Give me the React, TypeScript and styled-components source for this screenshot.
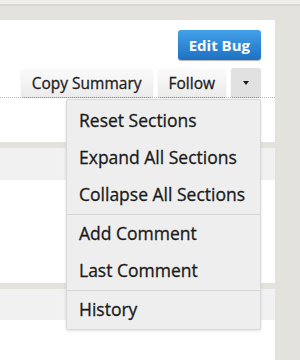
import React from "react";
import styled, { createGlobalStyle } from "styled-components";

const GlobalStyle = createGlobalStyle`
  html, body {
    margin: 0;
    padding: 0;
    background: #e4e2dc;
    font-family: "Open Sans", "Noto Sans", sans-serif;
    color: #1c1c1c;
  }
`;

const Page = styled.div`
  width: 300px;
  height: 360px;
  overflow: hidden;
`;

const TopStrip = styled.div`
  height: 4px;
  background: #efeeeb;
  border-bottom: 2px solid #d9d7d1;
  margin-bottom: 14px;
`;

const Panel = styled.div`
  width: 275px;
  display: flex;
  flex-direction: column;
  gap: 6px;
  & > * {
    flex-shrink: 0;
  }
`;

const Header = styled.div`
  background: #fff;
  height: 122px;
  padding-top: 10px;
  box-sizing: border-box;
  display: flex;
  flex-direction: column;
`;

const EditRow = styled.div`
  display: flex;
  justify-content: flex-end;
  padding-right: 14px;
`;

const ActionBar = styled.div`
  margin-top: 8px;
  display: flex;
  justify-content: flex-end;
  gap: 5px;
  padding-right: 14px;
  border-bottom: 1px dotted #b5b5b5;
`;

const Button = styled.button<{ $pressed?: boolean }>`
  height: 29px;
  padding: 0 11px;
  border: none;
  border-radius: 3px;
  font-family: inherit;
  font-size: 15.5px;
  -webkit-text-stroke: 0.3px currentColor;
  color: #1c1c1c;
  background: ${(p) =>
    p.$pressed ? "#e1e1e1" : "linear-gradient(#fbfbfb, #ebebeb)"};
  box-shadow: 0 1px 1px rgba(0, 0, 0, 0.22);
  display: flex;
  align-items: center;
  justify-content: center;
  cursor: pointer;
`;

const IconButton = styled(Button)`
  width: 30px;
  padding: 0;
`;

const PrimaryButton = styled(Button)`
  height: 30px;
  padding: 0 11px;
  font-size: 15px;
  font-weight: 700;
  -webkit-text-stroke: 0;
  color: #fff;
  background: linear-gradient(#43a1e9, #1e71c1);
  box-shadow: 0 1px 1px rgba(0, 0, 0, 0.3);
`;

const MenuAnchor = styled.div`
  position: relative;
`;

const Caret = styled.span`
  width: 0;
  height: 0;
  border-left: 3.5px solid transparent;
  border-right: 3.5px solid transparent;
  border-top: 4px solid #1c1c1c;
`;

const Menu = styled.div`
  position: absolute;
  right: 0;
  top: calc(100% + 2px);
  width: 195px;
  box-sizing: border-box;
  padding-top: 2px;
  background: #eeeeee;
  border: 1px solid #d8d8d8;
  border-radius: 2px;
  box-shadow: 0 1px 3px rgba(0, 0, 0, 0.12);
  z-index: 10;
`;

const MenuGroup = styled.div`
  padding-bottom: 1px;
  & + & {
    border-top: 1px solid #d6d6d6;
  }
`;

const MenuItem = styled.div`
  height: 37px;
  line-height: 37px;
  padding: 0 12px;
  font-size: 17.5px;
  -webkit-text-stroke: 0.3px currentColor;
  color: #1a1a1a;
  white-space: nowrap;
`;

const Module = styled.div<{ $height: number }>`
  display: flex;
  flex-direction: column;
  background: #fff;
  height: ${(p) => p.$height}px;
`;

const ModuleHeader = styled.div<{ $h: number }>`
  height: ${(p) => p.$h}px;
  background: #f1f1f1;
`;

const ModuleBody = styled.div`
  flex: 1;
  background: #fff;
`;

const groups = [
  ["Reset Sections", "Expand All Sections", "Collapse All Sections"],
  ["Add Comment", "Last Comment"],
  ["History"],
];

export default function App() {
  return (
    <Page>
      <GlobalStyle />
      <TopStrip />
      <Panel>
        <Header>
          <EditRow>
            <PrimaryButton>Edit Bug</PrimaryButton>
          </EditRow>
          <ActionBar>
            <Button>Copy Summary</Button>
            <Button>Follow</Button>
            <MenuAnchor>
              <IconButton $pressed>
                <Caret />
              </IconButton>
              <Menu>
                {groups.map((g, i) => (
                  <MenuGroup key={i}>
                    {g.map((label) => (
                      <MenuItem key={label}>{label}</MenuItem>
                    ))}
                  </MenuGroup>
                ))}
              </Menu>
            </MenuAnchor>
          </ActionBar>
        </Header>
        <Module $height={135}>
          <ModuleHeader $h={32} />
          <ModuleBody />
        </Module>
        <Module $height={120}>
          <ModuleHeader $h={31} />
          <ModuleBody />
        </Module>
      </Panel>
    </Page>
  );
}
